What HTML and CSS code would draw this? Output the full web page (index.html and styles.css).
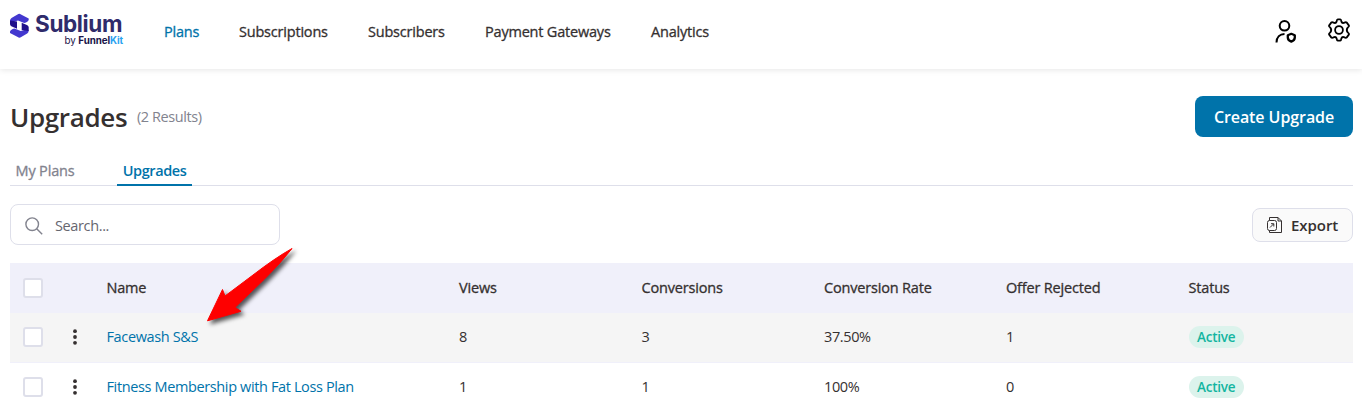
FILE: index.html
```html
<!DOCTYPE html>
<html lang="en">

<head>
    <meta charset="UTF-8">
    <meta name="viewport" content="width=device-width, initial-scale=1.0">
    <title>Upgrades - Sublium</title>
    <link rel="stylesheet" href="styles.css">
</head>

<body>
    <header class="top-bar">
        <a class="logo" href="#">
            <svg class="logo-mark" viewBox="0 0 20 26" width="20" height="26">
                <path d="M1 8 Q1 5.800 2.500 5 L8.500 1.400 Q10.300 0.300 12 1.400 L19.700 5.500 V7 Q19.500 8.300 17 9.500 Q15.500 10.200 14 9.600 L9 7.500 L2 9.500 Z" fill="#4338cf" />
                <path d="M1 7.500 L8 8.500 V15.800 L2.300 13.300 Q1 12.600 1 11 Z" fill="#20108a" />
                <path d="M19.700 17.500 Q19.700 19.700 18.200 20.500 L12.200 24.100 Q10.400 25.200 8.700 24.100 L1 20 V18.500 Q1.200 17.200 3.700 16 Q5.200 15.300 6.700 15.900 L11.700 18 L18.700 16 Z" fill="#4338cf" />
                <path d="M19.700 18 L12.700 17 V9.700 L18.400 12.200 Q19.700 12.900 19.700 14.500 Z" fill="#20108a" />
            </svg>
            <span class="logo-text">
                <span class="logo-name">Sublium</span>
                <span class="logo-by">by <b>Funnel<i>Kit</i></b></span>
            </span>
        </a>
        <nav class="main-nav">
            <a class="active w-plans" href="#">Plans</a>
            <a class="w-subscriptions" href="#">Subscriptions</a>
            <a class="w-subscribers" href="#">Subscribers</a>
            <a class="w-gateways" href="#">Payment Gateways</a>
            <a class="w-analytics" href="#">Analytics</a>
        </nav>
        <div class="top-icons">
            <svg viewBox="0 0 24 26" width="24" height="26" fill="none" stroke="#000" stroke-width="2">
                <circle cx="10.500" cy="7.800" r="4.800" />
                <path d="M2.500 24.500 C2.500 19 6 15.900 10.500 15.900" />
                <path d="M17.300 15.800 L20.800 17.200 V19.500 C20.800 21.800 19.300 22.900 17.300 23.600 C15.300 22.900 13.800 21.800 13.800 19.500 V17.200 Z" stroke-width="2.300" stroke-linejoin="round" />
            </svg>
            <svg viewBox="0 0 24 24" width="24" height="24" fill="none" stroke="#000" stroke-width="1.800" stroke-linejoin="round">
                <path d="M9.600 3.600 Q9.900 1.300 10.700 1.300 H13.300 Q14.100 1.300 14.400 3.600 Q15 5.400 16.800 4.900 Q18.900 3.900 19.600 4.400 L22 7.600 Q22.300 8.400 20.700 9.600 Q18.800 12 20.700 14.400 Q22.300 15.600 22 16.400 L19.600 19.600 Q18.900 20.100 16.800 19.100 Q15 18.600 14.400 20.400 Q14.100 22.700 13.300 22.700 H10.700 Q9.900 22.700 9.600 20.400 Q9 18.600 7.200 19.100 Q5.100 20.100 4.400 19.600 L2 16.400 Q1.700 15.600 3.300 14.400 Q5.200 12 3.300 9.600 Q1.700 8.400 2 7.600 L4.400 4.400 Q5.100 3.900 7.200 4.900 Q9 5.400 9.600 3.600 Z" />
                <circle cx="12" cy="12" r="3.900" />
            </svg>
        </div>
    </header>

    <main class="page">
        <div class="page-head">
            <h1>Upgrades</h1>
            <span class="results">(2 Results)</span>
            <button class="btn-primary"><span>Create Upgrade</span></button>
        </div>

        <div class="tabs">
            <a class="tab" href="#">My Plans</a>
            <a class="tab active" href="#">Upgrades</a>
        </div>

        <div class="toolbar">
            <label class="search">
                <svg viewBox="0 0 18 18" width="18" height="18" fill="none" stroke="#82838e" stroke-width="1.400">
                    <circle cx="7.200" cy="7.200" r="6.300" />
                    <path d="M11.700 11.700 L17.200 17.200" />
                </svg>
                <span>Search...</span>
            </label>
            <button class="btn-export">
                <svg viewBox="0 0 16 16" width="16" height="16" fill="none" stroke="#353030" stroke-width="1">
                    <path d="M2.500 3.500 V0.500 H11 L14.500 4 V15.500 H2.500 V13.500" />
                    <path d="M11 0.500 V4 H14.500" />
                    <rect x="0.500" y="3.500" width="9" height="10" rx="2" />
                    <path d="M3 10.500 L6.500 7 M4 6.700 H6.800 V9.500" />
                </svg>
                <span>Export</span>
            </button>
        </div>

        <div class="table">
            <div class="row row-head">
                <span class="check"></span>
                <span></span>
                <span>Name</span>
                <span>Views</span>
                <span>Conversions</span>
                <span>Conversion Rate</span>
                <span>Offer Rejected</span>
                <span>Status</span>
            </div>
            <div class="row hovered">
                <span class="check"></span>
                <svg class="dots" viewBox="0 0 4 16" width="4" height="16"><circle cx="2" cy="2.200" r="1.900" /><circle cx="2" cy="8" r="1.900" /><circle cx="2" cy="13.800" r="1.900" /></svg>
                <a href="#">Facewash S&amp;S</a>
                <span>8</span>
                <span>3</span>
                <span>37.50%</span>
                <span>1</span>
                <span><em class="badge">Active</em></span>
            </div>
            <div class="row">
                <span class="check"></span>
                <svg class="dots" viewBox="0 0 4 16" width="4" height="16"><circle cx="2" cy="2.200" r="1.900" /><circle cx="2" cy="8" r="1.900" /><circle cx="2" cy="13.800" r="1.900" /></svg>
                <a href="#">Fitness Membership with Fat Loss Plan</a>
                <span>1</span>
                <span>1</span>
                <span>100%</span>
                <span>0</span>
                <span><em class="badge">Active</em></span>
            </div>
        </div>
    </main>

    <svg class="arrow" viewBox="0 0 110 96" width="110" height="96">
        <path d="M92 8.500 Q75 18 53 35 L25 56 L22.500 49.500 L7.500 80.800 L41 71.300 L35 67.500 L64 39.500 Q80 24 92 8.500 Z" fill="#fe0000" stroke="#fe0000" stroke-linejoin="round" />
    </svg>
</body>

</html>
```
FILE: styles.css
```css
* {
    box-sizing: border-box;
}

body {
    margin: 0;
    height: 415px;
    overflow: hidden;
    position: relative;
    background: #fff;
    color: #353030;
    font-family: "Open Sans", "Noto Sans", sans-serif;
    font-size: 14.5px;
    line-height: 20px;
    letter-spacing: -0.37px;
}

a {
    color: #0073aa;
    text-decoration: none;
}

button {
    font: inherit;
    letter-spacing: inherit;
    color: inherit;
}

.top-bar {
    height: 69px;
    display: flex;
    align-items: flex-start;
    padding: 0 11px 0 9px;
    box-shadow: 0 1px 6px rgba(0, 0, 0, 0.1);
}

.logo {
    width: 155px;
    display: flex;
    gap: 6px;
    padding-top: 13px;
    font-family: Inter, sans-serif;
}

.logo-text {
    display: flex;
    flex-direction: column;
    width: 88px;
}

.logo-name {
    color: #2f2b6b;
    font-size: 22.5px;
    line-height: 22px;
    font-weight: 700;
    letter-spacing: -0.35px;
}

.logo-by {
    align-self: flex-end;
    color: #1b1449;
    font-size: 9.8px;
    line-height: 12px;
    letter-spacing: -0.1px;
}

.logo-by i {
    color: #2ba3f0;
    font-style: normal;
}

.main-nav {
    display: flex;
    gap: 40px;
    padding-top: 22px;
    letter-spacing: -0.2px;
    -webkit-text-stroke: 0.3px;
}

.main-nav a {
    color: #353030;
    white-space: nowrap;
}

.main-nav a.active {
    color: #0073aa;
}

.w-plans {
    width: 35px;
}

.w-subscriptions {
    width: 89px;
}

.w-subscribers {
    width: 77px;
}

.w-gateways {
    width: 126px;
}

.top-icons {
    display: flex;
    align-items: flex-start;
    gap: 29px;
    margin-left: auto;
    padding-top: 18px;
}

.page {
    padding: 27px 9px 0 10px;
}

.page-head {
    display: flex;
    align-items: center;
    height: 41px;
}

h1 {
    margin: 0;
    width: 127px;
    font-size: 26px;
    line-height: 34px;
    font-weight: 600;
    letter-spacing: -0.35px;
}

.results {
    color: #82838e;
    letter-spacing: -0.42px;
}

.btn-primary {
    margin-left: auto;
    width: 158px;
    height: 41px;
    padding: 0;
    border: 0;
    border-radius: 8px;
    background: #0073aa;
    color: #fff;
    font-size: 16px;
    font-weight: 600;
    letter-spacing: -0.08px;
}

.tabs {
    display: flex;
    gap: 37px;
    height: 49px;
    align-items: flex-end;
    border-bottom: 1px solid #dedfea;
}

.tab {
    height: 25px;
    padding: 0 5.5px;
    color: #82838e;
    letter-spacing: -0.15px;
    -webkit-text-stroke: 0.3px;
    margin-bottom: -1px;
}

.tab.active {
    color: #0073aa;
    font-weight: 600;
    letter-spacing: -0.38px;
    -webkit-text-stroke: 0;
    border-bottom: 2px solid #0073aa;
}

.toolbar {
    display: flex;
    justify-content: space-between;
    align-items: center;
    margin-top: 18px;
    height: 41px;
}

.search {
    display: flex;
    align-items: center;
    gap: 12px;
    width: 270px;
    height: 41px;
    padding: 2px 14px 0;
    border: 1px solid #dedfea;
    border-radius: 8px;
    color: #66666f;
}

.btn-export {
    display: flex;
    align-items: center;
    gap: 8px;
    width: 101px;
    height: 34px;
    padding: 1px 12px 0 14px;
    border: 1px solid #dedfea;
    border-radius: 8px;
    background: #fafafa;
    font-size: 15px;
    font-weight: 600;
    letter-spacing: -0.05px;
}

.table {
    margin-top: 18px;
}

.row {
    display: grid;
    grid-template-columns: 50px 33.5px 352.5px 182.5px 182.5px 182px 182.5px 1fr;
    align-items: center;
    height: 48px;
    padding-left: 13px;
}

.row-head {
    height: 50px;
    background: #f0f0fa;
    letter-spacing: -0.18px;
    -webkit-text-stroke: 0.3px;
}

.hovered {
    height: 50px;
    padding-bottom: 1px;
    background: #f5f5f5;
    border-bottom: 1px solid #f0f0fa;
}

.check {
    width: 20px;
    height: 20px;
    border: 2px solid #dedfea;
    border-radius: 3px;
    background: #fff;
}

.dots {
    fill: #353030;
}

.badge {
    display: inline-block;
    height: 22px;
    padding: 0 8.5px;
    border-radius: 11px;
    background: #dcf3ec;
    color: #13b5a0;
    font-size: 13.5px;
    line-height: 22px;
    font-style: normal;
    font-weight: 600;
    letter-spacing: -0.25px;
}

/* callout arrow over the table */
.arrow {
    position: absolute;
    left: 200px;
    top: 240px;
    filter: drop-shadow(3px 3px 2px rgba(0, 0, 0, 0.65));
}
```
